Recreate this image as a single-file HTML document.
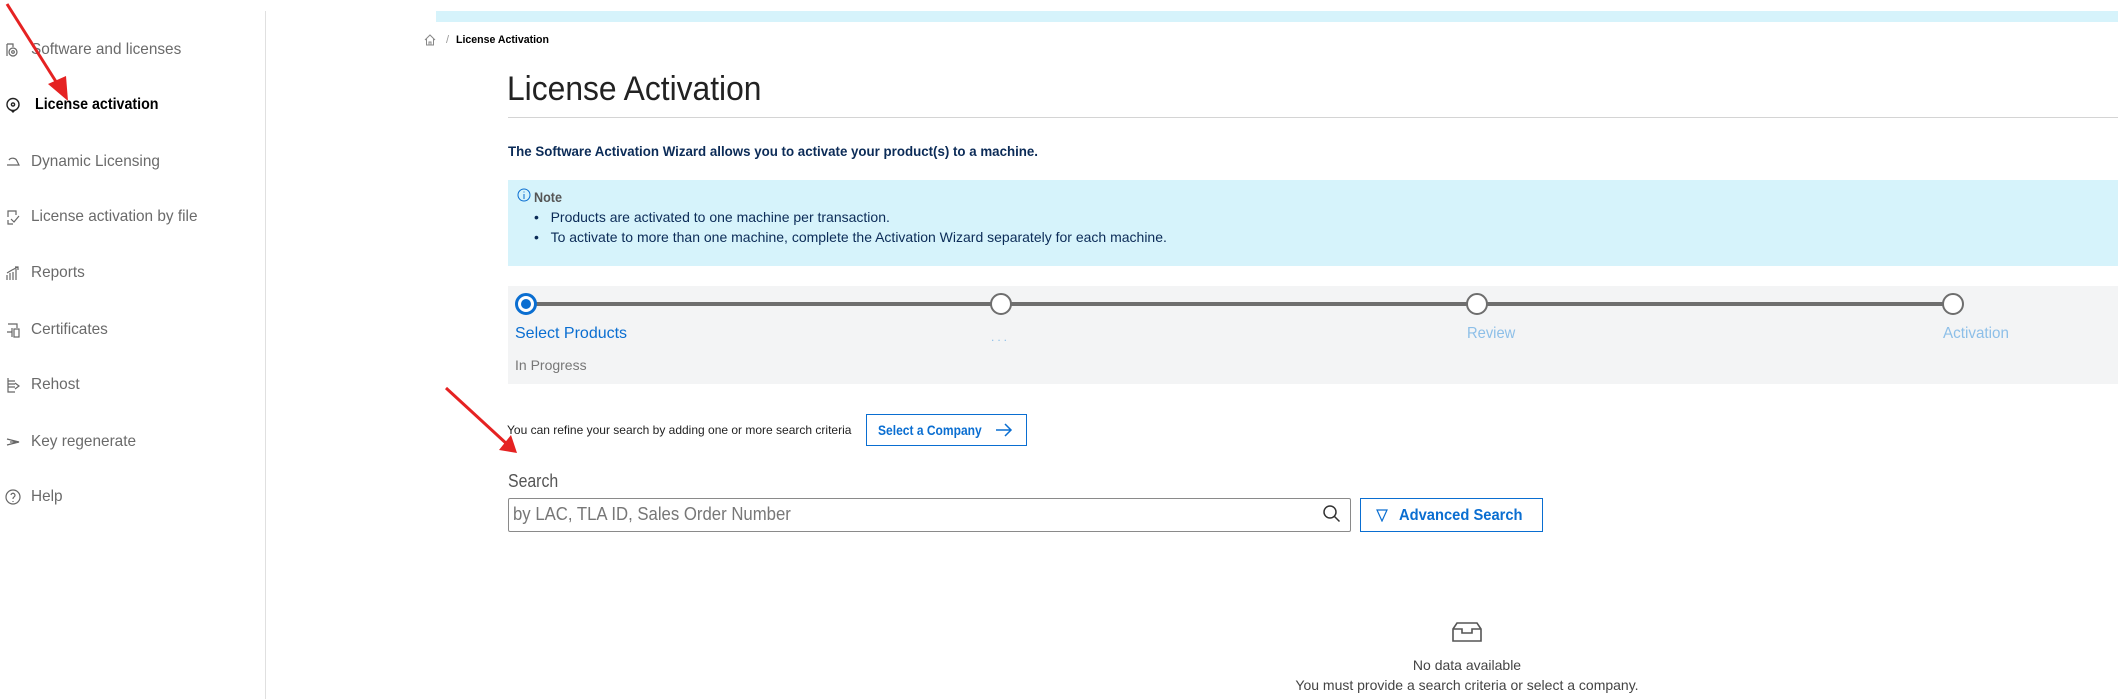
<!DOCTYPE html>
<html><head><meta charset="utf-8"><style>
*{margin:0;padding:0;box-sizing:border-box}
body{width:2118px;height:699px;background:#fff;font-family:"Liberation Sans",Arial,sans-serif;position:relative;overflow:hidden;color:#333}
.a{position:absolute;white-space:nowrap}
.side{position:absolute;left:0;top:11px;width:266px;height:688px;border-right:1px solid #e0e0e0}
.it{position:absolute;left:31px;font-size:16px;color:#6a6a6a;line-height:20px;transform:scaleX(.96);transform-origin:left}
.ic{position:absolute;left:5px;width:16px;height:16px}
.steplbl{position:absolute;top:325px;font-size:16px;color:#8dbfe8}
.circ{position:absolute;top:293px;width:22px;height:22px;border-radius:50%;border:2px solid #6e6e6e;background:#fff}
</style></head><body>
<div class="side"></div>
<svg class="ic" style="top:42px" viewBox="0 0 16 16" fill="none" stroke="#666" stroke-width="1.2"><path d="M2 2h6v3M2 2v12"/><circle cx="8" cy="10" r="4"/><circle cx="8" cy="10" r="1.3"/></svg>
<div class="it" style="top:40px">Software and licenses</div>
<svg class="ic" style="top:97px" viewBox="0 0 16 16" fill="none" stroke="#222" stroke-width="1.4"><circle cx="8" cy="7.5" r="6"/><circle cx="8" cy="7.5" r="1.6"/><path d="M6 13l2 2 2-2"/></svg>
<div class="it" style="top:95px;left:35px;color:#000;font-weight:bold;transform:scaleX(.89)">License activation</div>
<svg class="ic" style="top:154px" viewBox="0 0 16 16" fill="none" stroke="#666" stroke-width="1.2"><path d="M2 11h12l-2-4c-1-3-6-4-8-1"/></svg>
<div class="it" style="top:152px">Dynamic Licensing</div>
<svg class="ic" style="top:209px" viewBox="0 0 16 16" fill="none" stroke="#666" stroke-width="1.2"><path d="M3 8V2h8v4M3 11v4h5M6 10l3 3 5-6"/></svg>
<div class="it" style="top:207px">License activation by file</div>
<svg class="ic" style="top:265px" viewBox="0 0 16 16" fill="none" stroke="#666" stroke-width="1.2"><path d="M2 15v-5M5 15V8M8 15V7M11 15V4M2 8l5-3 6-3M10 2h3v3"/></svg>
<div class="it" style="top:263px">Reports</div>
<svg class="ic" style="top:322px" viewBox="0 0 16 16" fill="none" stroke="#666" stroke-width="1.2"><path d="M3 2h9v4M2 10h5M7 6v9"/><rect x="9" y="7" width="5" height="8"/></svg>
<div class="it" style="top:320px">Certificates</div>
<svg class="ic" style="top:377px" viewBox="0 0 16 16" fill="none" stroke="#666" stroke-width="1.2"><path d="M3 1v14h7M3 4h7M3 7h7M3 10h7M10 6l4 3-4 3"/></svg>
<div class="it" style="top:375px">Rehost</div>
<svg class="ic" style="top:434px" viewBox="0 0 16 16" fill="none" stroke="#666" stroke-width="1.2"><path d="M2 5l12 3-12 3M5 8h6"/></svg>
<div class="it" style="top:432px">Key regenerate</div>
<svg class="ic" style="top:489px" viewBox="0 0 16 16" fill="none" stroke="#666" stroke-width="1.2"><circle cx="8" cy="8" r="7"/><path d="M6 6a2 2 0 1 1 3 2c-1 .5-1 1-1 2M8 12v1"/></svg>
<div class="it" style="top:487px">Help</div>

<div class="a" style="left:436px;top:11px;width:1682px;height:11px;background:#d6f3fb"></div>
<svg class="a" style="left:424px;top:34px" width="12" height="12" viewBox="0 0 12 12" fill="none" stroke="#888" stroke-width="1"><path d="M1 6l5-5 5 5M2.5 5v6h7V5M5 11V8h2v3"/></svg>
<div class="a" style="left:446px;top:34px;font-size:11px;color:#999">/</div>
<div class="a" style="left:456px;top:34px;font-size:11px;font-weight:bold;color:#000;transform:scaleX(.96);transform-origin:left">License Activation</div>

<div class="a" style="left:507px;top:70px;font-size:34px;color:#222;transform:scaleX(.935);transform-origin:left">License Activation</div>
<div class="a" style="left:508px;top:117px;width:1610px;height:1px;background:#d4d4d4"></div>
<div class="a" style="left:508px;top:143px;font-size:14px;font-weight:bold;color:#0b2b57;transform:scaleX(.95);transform-origin:left">The Software Activation Wizard allows you to activate your product(s) to a machine.</div>

<div class="a" style="left:508px;top:180px;width:1610px;height:86px;background:#d6f3fb"></div>
<svg class="a" style="left:517px;top:188px" width="14" height="14" viewBox="0 0 14 14" fill="none" stroke="#0a6ed1" stroke-width="1"><circle cx="7" cy="7" r="6"/><path d="M7 6v5M7 3.5v1"/></svg>
<div class="a" style="left:534px;top:189px;font-size:14px;font-weight:bold;color:#555;transform:scaleX(.9);transform-origin:left">Note</div>
<div class="a" style="left:534px;top:209px;font-size:14px;color:#0b2b57">•&nbsp;&nbsp;&nbsp;Products are activated to one machine per transaction.</div>
<div class="a" style="left:534px;top:229px;font-size:14px;color:#0b2b57">•&nbsp;&nbsp;&nbsp;To activate to more than one machine, complete the Activation Wizard separately for each machine.</div>

<div class="a" style="left:508px;top:286px;width:1610px;height:98px;background:#f3f4f5"></div>
<div class="a" style="left:526px;top:302px;width:1428px;height:4px;background:#6e6e6e"></div>
<div class="circ" style="left:515px;border-color:#0a6ed1;border-width:3px"><div style="position:absolute;left:3px;top:3px;width:10px;height:10px;border-radius:50%;background:#0a6ed1"></div></div>
<div class="circ" style="left:990px"></div>
<div class="circ" style="left:1466px"></div>
<div class="circ" style="left:1942px"></div>
<div class="steplbl" style="left:515px;color:#0a6ed1">Select Products</div>
<div class="steplbl" style="left:991px;font-size:12px;top:330px;letter-spacing:3px">...</div>
<div class="steplbl" style="left:1467px;transform:scaleX(.92);transform-origin:left">Review</div>
<div class="steplbl" style="left:1943px;transform:scaleX(.95);transform-origin:left">Activation</div>
<div class="a" style="left:515px;top:357px;font-size:14px;color:#777">In Progress</div>

<div class="a" style="left:507px;top:423px;font-size:12px;color:#222">You can refine your search by adding one or more search criteria</div>
<div class="a" style="left:866px;top:414px;width:161px;height:32px;border:1px solid #0a6ed1;color:#0a6ed1;font-size:14px;font-weight:bold;padding:7px 0 0 11px"><span style="display:inline-block;transform:scaleX(.86);transform-origin:left">Select a Company</span></div>
<svg class="a" style="left:995px;top:422px" width="18" height="16" viewBox="0 0 18 16" fill="none" stroke="#0a6ed1" stroke-width="1.5"><path d="M1 8h15M10 2l6 6-6 6"/></svg>

<div class="a" style="left:508px;top:471px;font-size:18px;color:#555;transform:scaleX(.88);transform-origin:left">Search</div>
<div class="a" style="left:508px;top:498px;width:843px;height:34px;border:1px solid #8a8a8a;border-radius:2px"></div>
<div class="a" style="left:513px;top:504px;font-size:18px;color:#777;transform:scaleX(.93);transform-origin:left">by LAC, TLA ID, Sales Order Number</div>
<svg class="a" style="left:1322px;top:504px" width="20" height="20" viewBox="0 0 20 20" fill="none" stroke="#333" stroke-width="1.5"><circle cx="8" cy="8" r="6"/><path d="M12.5 12.5l5 5"/></svg>
<div class="a" style="left:1360px;top:498px;width:183px;height:34px;border:1px solid #0a6ed1;color:#0a6ed1;font-size:16px;font-weight:bold;padding:8px 0 0 38px"><span style="display:inline-block;transform:scaleX(.92);transform-origin:left">Advanced Search</span></div>
<svg class="a" style="left:1376px;top:509px" width="12" height="13" viewBox="0 0 12 13" fill="none" stroke="#0a6ed1" stroke-width="1.2"><path d="M1 1h10L6 12z"/></svg>

<svg class="a" style="left:1451px;top:622px" width="32" height="20" viewBox="0 0 32 20" fill="none" stroke="#555" stroke-width="1.6"><path d="M2 7l4-6h20l4 6v12H2zM2 7h9v4h10V7h9"/></svg>
<div class="a" style="left:1317px;top:657px;width:300px;text-align:center;font-size:14px;color:#444">No data available</div>
<div class="a" style="left:1167px;top:677px;width:600px;text-align:center;font-size:14px;color:#444">You must provide a search criteria or select a company.</div>

<svg class="a" style="left:0;top:0" width="2118" height="699" viewBox="0 0 2118 699">
<path d="M7 4L60 88" stroke="#e52222" stroke-width="3"/><path d="M48 84L68 101L66 76z" fill="#e52222"/>
<path d="M446 388L508 445" stroke="#e52222" stroke-width="3"/><path d="M499 450L517 453L511 435z" fill="#e52222"/>
</svg>
</body></html>
